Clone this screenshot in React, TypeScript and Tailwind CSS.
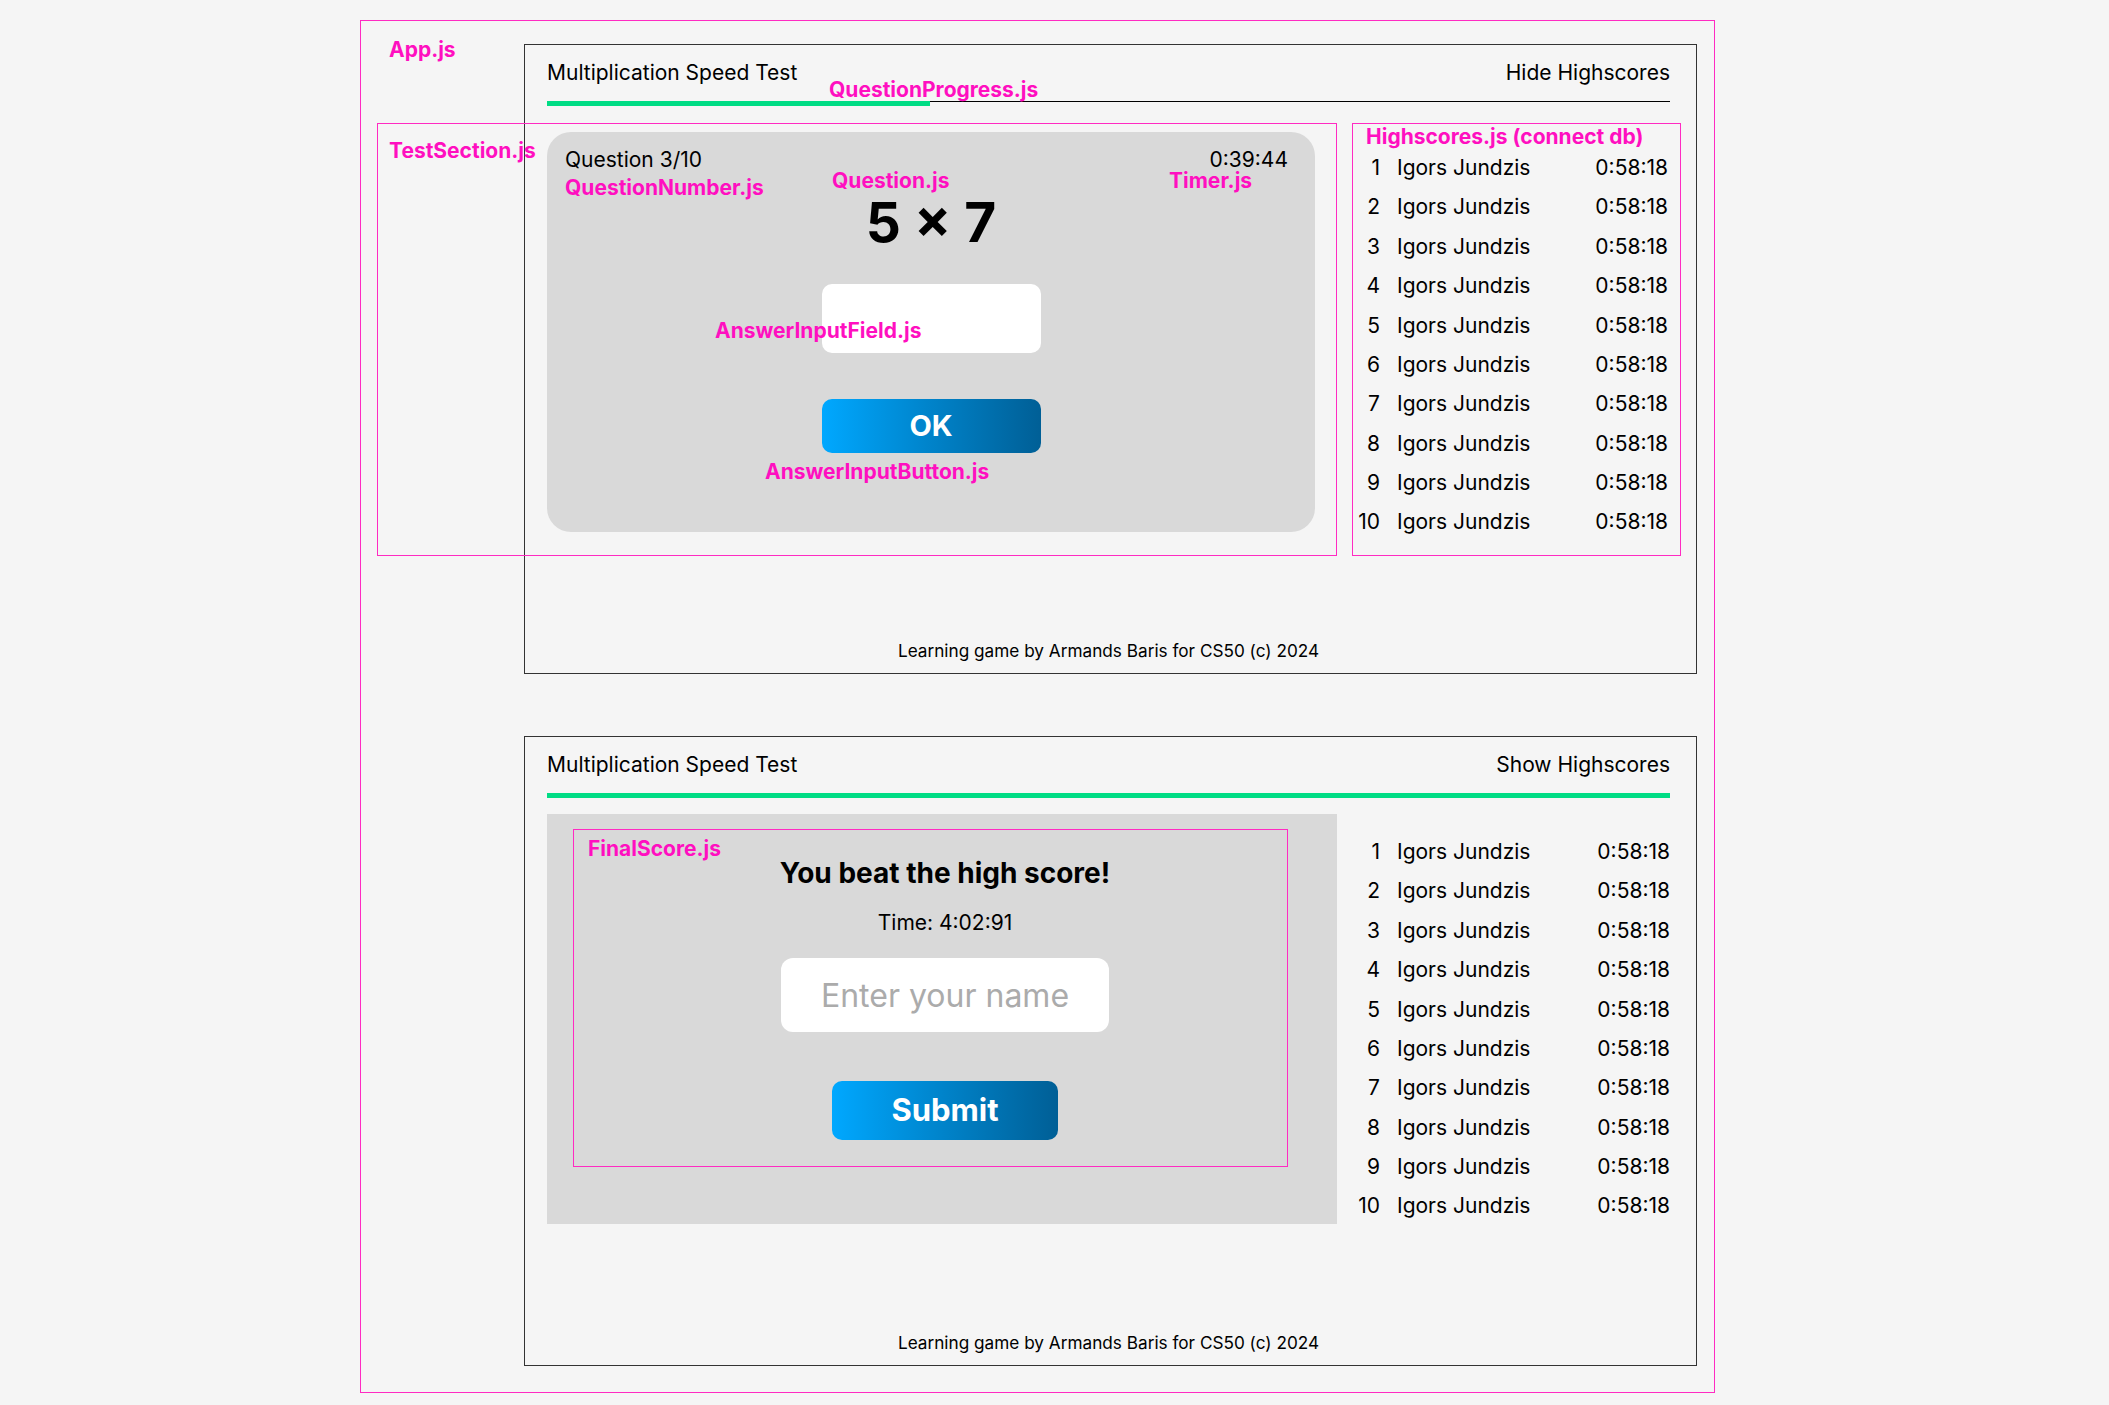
const scores = Array.from({ length: 10 }, (_, i) => ({
  rank: i + 1,
  name: "Igors Jundzis",
  time: "0:58:18",
}));

// pink annotation text
function Tag({ children, className = "" }: { children: React.ReactNode; className?: string }) {
  return (
    <span
      className={`whitespace-nowrap text-[21px] font-bold leading-[26px] text-[#ff0fc0] ${className}`}
    >
      {children}
    </span>
  );
}

function Header({ action, barClass }: { action: string; barClass: string }) {
  return (
    <>
      <div className="flex justify-between pt-[14px] text-[21px] leading-[28px]">
        <span>Multiplication Speed Test</span>
        <span>{action}</span>
      </div>
      <div className="mt-[14px] h-px bg-black" />
      <div className={`-mt-px h-[5px] bg-[#00dc84] ${barClass}`} />
    </>
  );
}

function ScoreRows() {
  return (
    <>
      {scores.map((s) => (
        <div key={s.rank} className="flex h-[39.4px] items-center text-[21px]">
          <span className="w-[27px] text-right">{s.rank}</span>
          <span className="ml-[17px]">{s.name}</span>
          <span className="ml-auto">{s.time}</span>
        </div>
      ))}
    </>
  );
}

function Footer() {
  return (
    <div className="mt-auto pb-[10px] text-center text-[17.2px] leading-[24px]">
      Learning game by Armands Baris for CS50 (c) 2024
    </div>
  );
}

export default function App() {
  return (
    <div className="min-h-screen bg-[#f5f5f5] pl-[360px] pt-[20px] font-[Inter,sans-serif] text-black">
      <div className="flex h-[1373px] w-[1355px] border border-[#ff2bc2]">
        <div className="w-[163px] shrink-0 pl-[28px] pt-[15px]">
          <Tag className="leading-[28px]">App.js</Tag>
        </div>

        <div className="flex flex-col gap-[62px] pt-[23px]">
          {/* Test in progress */}
          <div className="relative flex h-[630px] w-[1173px] flex-col border border-[#333] pl-[22px] pr-[26px]">
            <Header action="Hide Highscores" barClass="w-[383px]" />
            <Tag className="absolute left-[304px] top-[32px]">QuestionProgress.js</Tag>

            <div className="-ml-[170px] -mr-[12px] mt-[17px] flex gap-[15px]">
              <div className="flex h-[433px] w-[960px] shrink-0 border border-[#ff2bc2] pt-[8px]">
                <div className="w-[169px] shrink-0 pl-[11px] pt-[6px]">
                  <Tag>TestSection.js</Tag>
                </div>
                <div className="relative flex h-[400px] w-[768px] shrink-0 flex-col items-center rounded-3xl bg-[#d9d9d9]">
                  <div className="flex w-full justify-between pl-[18px] pr-[27px] pt-[14px] text-[21px] leading-[28px]">
                    <span>Question 3/10</span>
                    <span>0:39:44</span>
                  </div>
                  <div className="mt-[21px] text-[55px] font-bold leading-none">5 × 7</div>
                  <input className="mt-[34px] h-[69px] w-[219px] rounded-[10px] bg-white text-center text-[24px] outline-none" />
                  <button className="mt-[46px] h-[54px] w-[219px] rounded-[10px] bg-linear-to-r from-[#00a8ff] to-[#005f96] text-[29px] font-bold text-white">
                    OK
                  </button>

                  <Tag className="absolute left-[18px] top-[43px]">QuestionNumber.js</Tag>
                  <Tag className="absolute left-[285px] top-[36px]">Question.js</Tag>
                  <Tag className="absolute left-[622px] top-[36px]">Timer.js</Tag>
                  <Tag className="absolute left-[168px] top-[186px]">AnswerInputField.js</Tag>
                  <Tag className="absolute left-[218px] top-[327px]">AnswerInputButton.js</Tag>
                </div>
              </div>

              <div className="flex h-[433px] w-[329px] shrink-0 flex-col border border-[#ff2bc2] pr-[12px]">
                <div className="h-[24px] pl-[13px]">
                  <Tag className="leading-[24px]">Highscores.js (connect db)</Tag>
                </div>
                <ScoreRows />
              </div>
            </div>

            <Footer />
          </div>

          {/* Final score */}
          <div className="relative flex h-[630px] w-[1173px] flex-col border border-[#333] pl-[22px] pr-[26px]">
            <Header action="Show Highscores" barClass="w-full" />

            <div className="mt-[16px] flex">
              <div className="relative flex h-[410px] w-[790px] shrink-0 flex-col items-center bg-[#d9d9d9] pl-[6px] pt-[42px]">
                <div className="absolute left-[26px] top-[15px] h-[338px] w-[715px] border border-[#ff2bc2] pl-[14px] pt-[6px]">
                  <Tag>FinalScore.js</Tag>
                </div>
                <div className="relative text-[28px] font-bold leading-[34px]">You beat the high score!</div>
                <div className="relative mt-[19px] text-[21px] leading-[28px]">Time: 4:02:91</div>
                <input
                  placeholder="Enter your name"
                  className="relative mt-[21px] h-[74px] w-[328px] rounded-[12px] bg-white text-center text-[32px] outline-none placeholder:text-[#ababab]"
                />
                <button className="relative mt-[49px] h-[59px] w-[226px] rounded-[10px] bg-linear-to-r from-[#00a8ff] to-[#005f96] text-[31px] font-bold text-white">
                  Submit
                </button>
              </div>

              <div className="ml-[16px] flex-1 pt-[18px]">
                <ScoreRows />
              </div>
            </div>

            <Footer />
          </div>
        </div>
      </div>
    </div>
  );
}
